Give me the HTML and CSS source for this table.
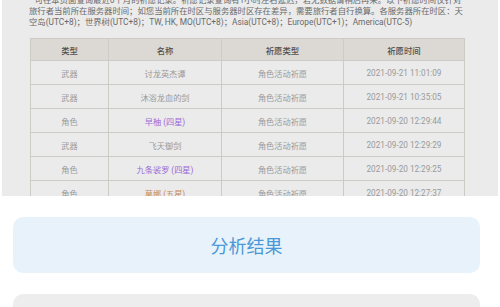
FILE: index.html
```
<!DOCTYPE html>
<html lang="zh-CN">
<head>
<meta charset="utf-8">
<title>祈愿记录</title>
<link rel="stylesheet" href="styles.css">
</head>
<body>
<div class="panel">
  <div class="inner">
    <p class="note">* 可在本页面查询最近6个月的祈愿记录。祈愿记录查询有1小时左右延迟，若无数据请稍后再来。以下祈愿时间仅针对旅行者当前所在服务器时间；如您当前所在时区与服务器时区存在差异，需要旅行者自行换算。各服务器所在时区：天空岛(UTC+8)；世界树(UTC+8)；TW, HK, MO(UTC+8)；Asia(UTC+8)；Europe(UTC+1)；America(UTC-5)</p>
    <table class="log">
      <colgroup><col class="c1"><col class="c2"><col class="c3"><col class="c4"></colgroup>
      <thead>
        <tr><th>类型</th><th>名称</th><th>祈愿类型</th><th>祈愿时间</th></tr>
      </thead>
      <tbody>
        <tr><td>武器</td><td>讨龙英杰谭</td><td>角色活动祈愿</td><td>2021-09-21 11:01:09</td></tr>
        <tr><td>武器</td><td>沐浴龙血的剑</td><td>角色活动祈愿</td><td>2021-09-21 10:35:05</td></tr>
        <tr><td>角色</td><td class="four">早柚 (四星)</td><td>角色活动祈愿</td><td>2021-09-20 12:29:44</td></tr>
        <tr><td>武器</td><td>飞天御剑</td><td>角色活动祈愿</td><td>2021-09-20 12:29:29</td></tr>
        <tr><td>角色</td><td class="four">九条裟罗 (四星)</td><td>角色活动祈愿</td><td>2021-09-20 12:29:25</td></tr>
        <tr><td>角色</td><td class="five">莫娜 (五星)</td><td>角色活动祈愿</td><td>2021-09-20 12:27:37</td></tr>
      </tbody>
    </table>
  </div>
</div>
<div class="actions">
  <div class="btn primary">分析结果</div>
  <div class="btn secondary"></div>
</div>
</body>
</html>
```
FILE: styles.css
```
html, body {
  margin: 0;
  padding: 0;
  background: #ffffff;
  font-family: "Roboto", "Noto Sans CJK SC", sans-serif;
}
.panel {
  margin: 0 2px;
  height: 196px;
  background: #ebebeb;
  overflow: hidden;
}
.inner {
  margin-top: -5.5px;
  padding: 0 30px 0 27px;
}
.note {
  margin: 0;
  font-size: 8.35px;
  line-height: 11px;
  color: #6a6a6a;
}
.log {
  margin: 10.5px 0 0 1px;
  width: 434px;
  border-collapse: collapse;
  table-layout: fixed;
}
.c1 { width: 78px; }
.c2 { width: 113px; }
.c3 { width: 122px; }
.c4 { width: 121px; }
.log th, .log td {
  border: 1px solid #cdcbc6;
  text-align: center;
  padding: 0;
  white-space: nowrap;
}
.log th {
  height: 21px;
  background: #dcd9d4;
  color: #505050;
  font-size: 8.4px;
  font-weight: 500;
}
.log td {
  height: 23px;
  background: #ebebeb;
  color: #9a9a9a;
  font-size: 8.2px;
}
.log td.four { color: #9b6ad6; }
.log td.five { color: #c98a55; }
.actions {
  display: flex;
  flex-direction: column;
  gap: 21px;
  margin: 21px 20px 0 13px;
}
.btn {
  height: 56px;
  border-radius: 10px;
  display: flex;
  align-items: center;
  justify-content: center;
  font-family: "Noto Sans CJK SC", sans-serif;
  font-size: 18px;
}
.primary {
  background: #e8f2fa;
  color: #4a98d8;
}
.secondary {
  background: #ededed;
}
```
